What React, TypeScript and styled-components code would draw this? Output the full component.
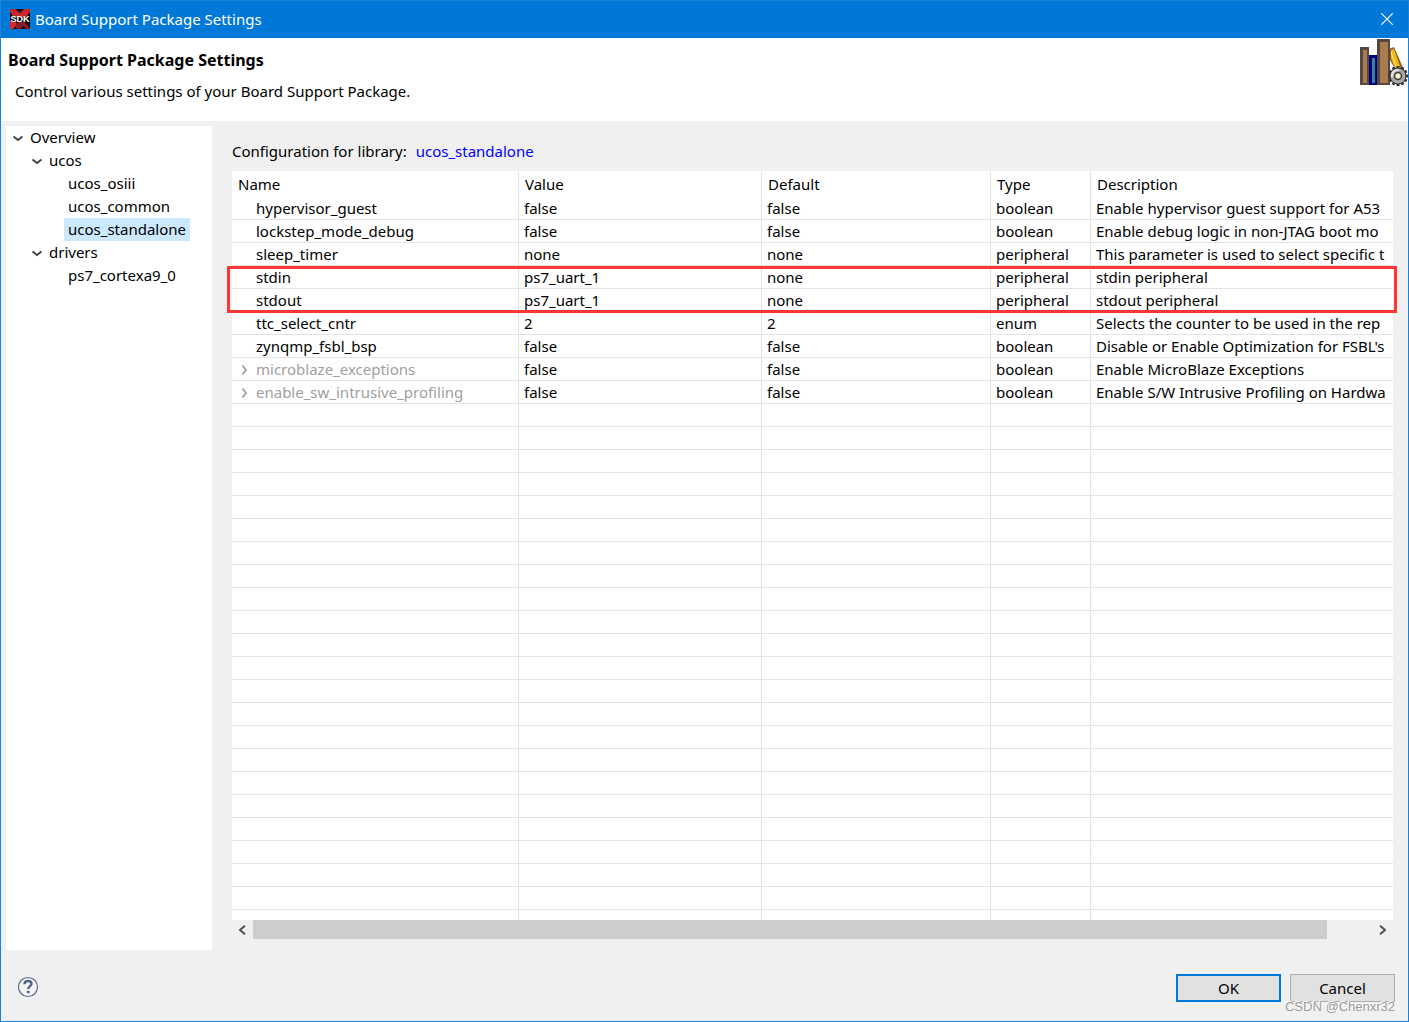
import React from "react";
import styled, { createGlobalStyle } from "styled-components";

const GlobalStyle = createGlobalStyle`
  *, *::before, *::after { box-sizing: border-box; }
  body { margin: 0; background: #f0f0f0; }
  body, button, table {
    font-family: "Noto Sans", "Open Sans", "Liberation Sans", sans-serif;
    font-size: 15px;
    line-height: 22px;
    color: #000;
  }
`;

const Window = styled.div`
  display: flex;
  flex-direction: column;
  height: 100vh;
  min-height: 480px;
  border: 1px solid #1883d7;
  background: #f0f0f0;
`;

const TitleBar = styled.header`
  display: flex;
  align-items: center;
  height: 37px;
  flex: none;
  padding: 0 0 2px 9px;
  gap: 5px;
  background: #0078d7;
  color: #fff;
`;

const TitleText = styled.span`
  flex: 1;
`;

const CloseButton = styled.button`
  display: flex;
  align-items: center;
  justify-content: center;
  width: 42px;
  height: 35px;
  padding: 0;
  border: 0;
  background: transparent;
`;

const Banner = styled.section`
  display: flex;
  justify-content: space-between;
  height: 83px;
  flex: none;
  padding: 1px 0 0 7px;
  background: #fff;
`;

const BannerText = styled.div`
  padding-top: 10px;
`;

const Heading = styled.h1`
  margin: 0 0 9px;
  font-size: 16px;
  line-height: 22px;
  font-weight: 700;
`;

const Subtitle = styled.p`
  margin: 0;
  padding-left: 7px;
`;

const Body = styled.main`
  display: flex;
  flex: 1;
  min-height: 0;
  gap: 20px;
  padding: 5px 15px 0 5px;
`;

const Tree = styled.ul`
  width: 206px;
  flex: none;
  margin: 0;
  padding: 0;
  list-style: none;
  background: #fff;
`;

const TreeItem = styled.li<{ $level: number }>`
  display: flex;
  align-items: center;
  height: 23px;
  padding-left: ${(p) => 6 + p.$level * 19}px;
`;

const TreeTwisty = styled.span`
  display: flex;
  width: 14px;
  flex: none;
`;

const TreeLabel = styled.button<{ $selected: boolean }>`
  height: 23px;
  padding: 0 4px 2px;
  border: 0;
  background: ${(p) => (p.$selected ? "#cce8ff" : "transparent")};
`;

const Detail = styled.section`
  display: flex;
  flex-direction: column;
  flex: 1;
  min-width: 0;
  padding: 14px 0 11px;
`;

const LibraryLine = styled.div`
  display: flex;
  gap: 9px;
  margin-bottom: 9px;
`;

const LibraryLink = styled.a`
  color: #00f;
  text-decoration: none;
`;

const GridFrame = styled.div`
  position: relative;
  flex: 1;
  min-height: 0;
`;

const GridViewport = styled.div`
  height: 100%;
  overflow: hidden;
  background: #fff;
`;

const Grid = styled.table`
  width: 100%;
  table-layout: fixed;
  border-collapse: separate;
  border-spacing: 0;
`;

const Col = styled.col<{ $width?: number }>`
  width: ${(p) => (p.$width ? `${p.$width}px` : "auto")};
`;

const HeadCell = styled.th`
  height: 26px;
  padding: 0 6px;
  border-right: 1px solid #e3e3e3;
  font-weight: 400;
  text-align: left;
  &:last-child { border-right: 0; }
`;

const Cell = styled.td`
  height: 23px;
  padding: 0 0 0 5px;
  border-right: 1px solid #e3e3e3;
  border-bottom: 1px solid #e3e3e3;
  overflow: hidden;
  white-space: nowrap;
  &:last-child { border-right: 0; }
`;

const NameCell = styled(Cell)<{ $dim: boolean }>`
  color: ${(p) => (p.$dim ? "#a0a0a0" : "#000")};
`;

const NameContent = styled.div`
  display: flex;
  align-items: center;
`;

const RowTwisty = styled.span`
  display: flex;
  width: 19px;
  flex: none;
  padding-left: 3px;
`;

const Highlight = styled.div`
  position: absolute;
  top: 95px;
  left: -5px;
  right: -4px;
  height: 47px;
  border: 3px solid #fc3737;
  pointer-events: none;
`;

const ScrollBar = styled.div`
  display: flex;
  height: 19px;
  flex: none;
`;

const ScrollButton = styled.button`
  display: flex;
  align-items: center;
  justify-content: center;
  width: 21px;
  padding: 0 2px 0 0;
  border: 0;
  background: transparent;
`;

const ScrollTrack = styled.div`
  flex: 1;
`;

const ScrollThumb = styled.div`
  width: 96%;
  height: 19px;
  background: #cdcdcd;
`;

const Footer = styled.footer`
  position: relative;
  display: flex;
  align-items: center;
  justify-content: space-between;
  height: 71px;
  flex: none;
  padding: 4px 13px 0 16px;
`;

const HelpButton = styled.button`
  display: flex;
  padding: 0 0 2px;
  border: 0;
  background: transparent;
`;

const Actions = styled.div`
  display: flex;
  gap: 9px;
`;

const ActionButton = styled.button<{ $primary?: boolean }>`
  width: 105px;
  height: 28px;
  padding: 0;
  border: ${(p) => (p.$primary ? "2px solid #0078d7" : "1px solid #adadad")};
  background: #e1e1e1;
`;

const Watermark = styled.span`
  position: absolute;
  right: 13px;
  bottom: 5px;
  font: 13px/18px "Liberation Sans", Arial, sans-serif;
  color: #9a9a9a;
  text-shadow: -1px -1px 0 #fff;
  pointer-events: none;
`;

const SdkIcon = () => (
  <svg width="20" height="20" viewBox="0 0 20 20" aria-hidden="true">
    <rect width="20" height="20" fill="#140a0c" />
    <path d="M0 0h5l5 4 4-4h6v3l-4 5H4L0 3z" fill="#c9262c" />
    <path d="M0 12h5l2 3-4 5H0z" fill="#d8292f" />
    <path d="M7 20l-2-3 4-4h5l6 6v1h-3l-4-3-3 3z" fill="#8d1c28" />
    <text x="10" y="13" textAnchor="middle" fontSize="9" fontWeight="700" fontFamily="Liberation Sans, sans-serif" fill="#fff">SDK</text>
  </svg>
);

const CloseIcon = () => (
  <svg width="12" height="12" viewBox="0 0 12 12" fill="none" stroke="#fff" strokeWidth="1.1" aria-hidden="true">
    <path d="M.3.3l11.4 11.4M11.7.3L.3 11.7" />
  </svg>
);

const TEETH = Array.from({ length: 12 }, (_, i) => i * 30);

const BooksIcon = () => (
  <svg width="48" height="48" viewBox="0 0 48 48" aria-hidden="true">
    <path d="M30 9.500l4-1.500 10 23-6 4-8-14z" fill="#8a5f2b" />
    <path d="M31 11l3-1 7 20-5 2-5-13z" fill="#f5b914" />
    <path d="M31 13l6 17" stroke="#ffe79a" strokeWidth="1" />
    <rect x="0" y="8" width="9" height="38" fill="#55493f" />
    <rect x="3" y="11" width="4" height="33" fill="#a97c50" />
    <rect x="9" y="16" width="8" height="30" fill="#000080" />
    <rect x="12" y="19" width="3" height="25" fill="#3a8096" />
    <rect x="17" y="0" width="13" height="46" fill="#55493f" />
    <rect x="20" y="3" width="8" height="41" fill="#a97c50" />
    <g transform="translate(38 37)">
      {TEETH.map((a) => (
        <rect key={a} x="-1.500" y="-10" width="3" height="4" fill="#333" transform={`rotate(${a})`} />
      ))}
      <circle r="8" fill="#a9a9a9" stroke="#333" strokeWidth="1" />
      <path d="M-6 1A6 6 0 0 1 1-6" fill="none" stroke="#e6e6e6" strokeWidth="2" />
      <circle r="3.500" fill="#f3e3b3" stroke="#3c3c3c" strokeWidth="1.500" />
      <circle r="1.200" fill="#fff" />
    </g>
  </svg>
);

const ExpandedIcon = () => (
  <svg width="12" height="8" viewBox="0 0 12 8" fill="none" stroke="#404040" strokeWidth="1.800" aria-hidden="true">
    <path d="M1.500 2.500L6 6l4.500-3.500" />
  </svg>
);

const CollapsedIcon = () => (
  <svg width="8" height="12" viewBox="0 0 8 12" fill="none" stroke="#a0a0a0" strokeWidth="1.800" aria-hidden="true">
    <path d="M2.500 2.500L6 7 2.500 11.500" />
  </svg>
);

const ScrollArrow = ({ left }: { left?: boolean }) => (
  <svg width="8" height="10" viewBox="0 0 8 10" fill="none" stroke="#505050" strokeWidth="2" aria-hidden="true">
    <path d={left ? "M7 .7L2 5l5 4.300" : "M2 .7L7 5 2 9.300"} />
  </svg>
);

const HelpIcon = () => (
  <svg width="22" height="22" viewBox="0 0 22 22" fill="none" aria-hidden="true">
    <circle cx="11" cy="11" r="9.500" fill="#f4f4f6" stroke="#5b6b8c" strokeWidth="1.200" />
    <path d="M7.500 8.200C7.600 5.800 9 5 11 5c2.200 0 3.500 1.100 3.500 2.800 0 2.600-3.300 2.600-3.300 5.200" stroke="#52648a" strokeWidth="2.400" />
    <rect x="9.800" y="14.800" width="2.800" height="2.400" fill="#52648a" />
  </svg>
);

type TreeNode = { label: string; level: number; open?: boolean; selected?: boolean };

const TREE: TreeNode[] = [
  { label: "Overview", level: 0, open: true },
  { label: "ucos", level: 1, open: true },
  { label: "ucos_osiii", level: 2 },
  { label: "ucos_common", level: 2 },
  { label: "ucos_standalone", level: 2, selected: true },
  { label: "drivers", level: 1, open: true },
  { label: "ps7_cortexa9_0", level: 2 },
];

type Setting = { name: string; value: string; def: string; type: string; desc: string; group?: boolean };

const SETTINGS: Setting[] = [
  { name: "hypervisor_guest", value: "false", def: "false", type: "boolean", desc: "Enable hypervisor guest support for A53" },
  { name: "lockstep_mode_debug", value: "false", def: "false", type: "boolean", desc: "Enable debug logic in non-JTAG boot mo" },
  { name: "sleep_timer", value: "none", def: "none", type: "peripheral", desc: "This parameter is used to select specific t" },
  { name: "stdin", value: "ps7_uart_1", def: "none", type: "peripheral", desc: "stdin peripheral" },
  { name: "stdout", value: "ps7_uart_1", def: "none", type: "peripheral", desc: "stdout peripheral" },
  { name: "ttc_select_cntr", value: "2", def: "2", type: "enum", desc: "Selects the counter to be used in the rep" },
  { name: "zynqmp_fsbl_bsp", value: "false", def: "false", type: "boolean", desc: "Disable or Enable Optimization for FSBL's" },
  { name: "microblaze_exceptions", value: "false", def: "false", type: "boolean", desc: "Enable MicroBlaze Exceptions", group: true },
  { name: "enable_sw_intrusive_profiling", value: "false", def: "false", type: "boolean", desc: "Enable S/W Intrusive Profiling on Hardwa", group: true },
];

const COLUMNS = ["Name", "Value", "Default", "Type", "Description"];
const BLANK_ROWS = Array.from({ length: 60 }, (_, i) => i);

export default function App() {
  return (
    <>
      <GlobalStyle />
      <Window>
        <TitleBar>
          <SdkIcon />
          <TitleText>Board Support Package Settings</TitleText>
          <CloseButton aria-label="Close"><CloseIcon /></CloseButton>
        </TitleBar>
        <Banner>
          <BannerText>
            <Heading>Board Support Package Settings</Heading>
            <Subtitle>Control various settings of your Board Support Package.</Subtitle>
          </BannerText>
          <BooksIcon />
        </Banner>
        <Body>
          <Tree>
            {TREE.map((n) => (
              <TreeItem key={n.label} $level={n.level}>
                <TreeTwisty>{n.open && <ExpandedIcon />}</TreeTwisty>
                <TreeLabel $selected={!!n.selected}>{n.label}</TreeLabel>
              </TreeItem>
            ))}
          </Tree>
          <Detail>
            <LibraryLine>
              <span>Configuration for library:</span>
              <LibraryLink href="#ucos_standalone">ucos_standalone</LibraryLink>
            </LibraryLine>
            <GridFrame>
              <GridViewport>
                <Grid>
                  <colgroup>
                    <Col $width={287} />
                    <Col $width={243} />
                    <Col $width={229} />
                    <Col $width={100} />
                    <Col />
                  </colgroup>
                  <thead>
                    <tr>{COLUMNS.map((c) => <HeadCell key={c} scope="col">{c}</HeadCell>)}</tr>
                  </thead>
                  <tbody>
                    {SETTINGS.map((s) => (
                      <tr key={s.name}>
                        <NameCell $dim={!!s.group}>
                          <NameContent>
                            <RowTwisty>{s.group && <CollapsedIcon />}</RowTwisty>
                            {s.name}
                          </NameContent>
                        </NameCell>
                        <Cell>{s.value}</Cell>
                        <Cell>{s.def}</Cell>
                        <Cell>{s.type}</Cell>
                        <Cell>{s.desc}</Cell>
                      </tr>
                    ))}
                    {BLANK_ROWS.map((i) => (
                      <tr key={i}>{COLUMNS.map((c) => <Cell key={c} />)}</tr>
                    ))}
                  </tbody>
                </Grid>
              </GridViewport>
              <Highlight />
            </GridFrame>
            <ScrollBar>
              <ScrollButton aria-label="Scroll left"><ScrollArrow left /></ScrollButton>
              <ScrollTrack><ScrollThumb /></ScrollTrack>
              <ScrollButton aria-label="Scroll right"><ScrollArrow /></ScrollButton>
            </ScrollBar>
          </Detail>
        </Body>
        <Footer>
          <HelpButton aria-label="Help"><HelpIcon /></HelpButton>
          <Actions>
            <ActionButton $primary>OK</ActionButton>
            <ActionButton>Cancel</ActionButton>
          </Actions>
          <Watermark>CSDN @Chenxr32</Watermark>
        </Footer>
      </Window>
    </>
  );
}
